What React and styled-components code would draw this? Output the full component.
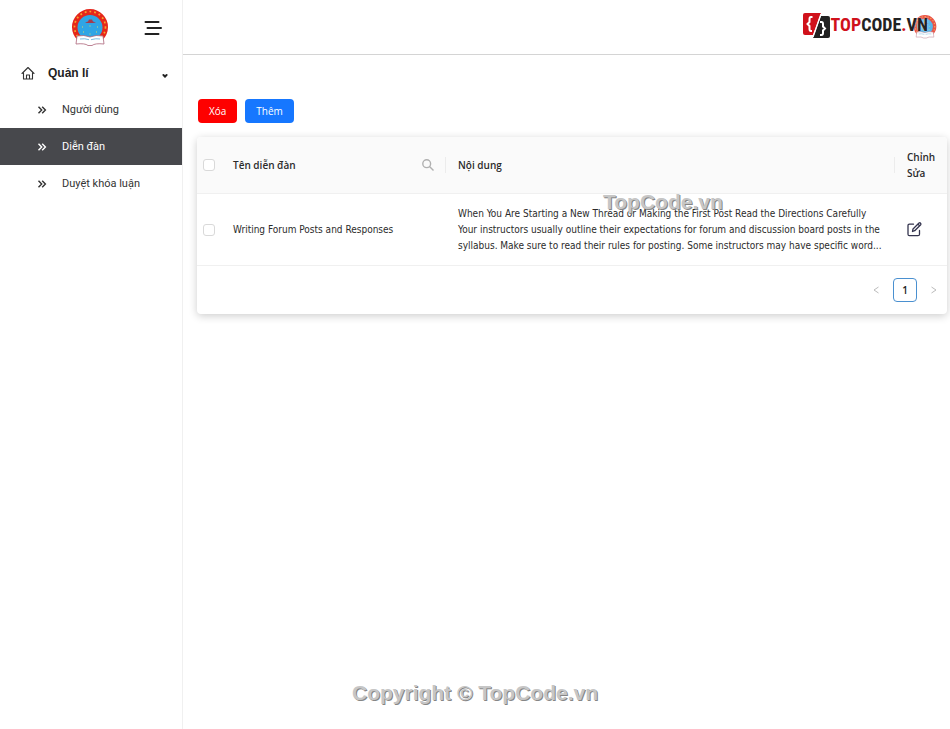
import React, { useState } from "react";
import styled, { createGlobalStyle } from "styled-components";

const GlobalStyle = createGlobalStyle`
  *, *::before, *::after { box-sizing: border-box; }
  body {
    margin: 0;
    background: #fff;
    color: #2b2b2b;
    font-family: "Open Sans", "Noto Sans", sans-serif;
    font-size: 10px;
    line-height: 16px;
  }
  button { font: inherit; cursor: pointer; }
`;

const Page = styled.div`
  position: relative;
  display: flex;
  min-height: 100vh;
`;

const Sidebar = styled.aside`
  flex: none;
  width: 183px;
  border-right: 1px solid #f0f0f0;
  font-family: "Liberation Sans", Arial, sans-serif;
`;

const Brand = styled.div`
  display: flex;
  align-items: center;
  justify-content: space-between;
  height: 55px;
  padding: 0 20px 0 71px;
`;

const IconButton = styled.button`
  display: flex;
  align-items: center;
  justify-content: center;
  padding: 0;
  border: 0;
  background: none;
  color: ${(p) => p.$color || "#222"};
`;

const GroupButton = styled.button`
  display: flex;
  align-items: center;
  width: 100%;
  height: 36px;
  padding: 0 13px 0 21px;
  border: 0;
  background: none;
  color: #222;
  && { font-size: 12px; font-weight: 700; }
`;

const GroupLabel = styled.span`
  flex: 1;
  padding-left: 13px;
  text-align: left;
`;

const Menu = styled.ul`
  margin: 0;
  padding: 0;
  list-style: none;
  font-family: Roboto, sans-serif;
  font-size: 11px;
`;

const MenuLink = styled.a`
  display: flex;
  align-items: center;
  gap: 15px;
  height: 37px;
  padding-left: 37px;
  color: ${(p) => (p.$active ? "#fff" : "#333")};
  background: ${(p) => (p.$active ? "#47484c" : "transparent")};
  text-decoration: none;
`;

const Main = styled.main`
  flex: 1;
  min-width: 0;
`;

const Header = styled.header`
  display: flex;
  align-items: center;
  justify-content: flex-end;
  height: 55px;
  padding: 0 13px 4px 0;
  border-bottom: 1px solid #d4d4d4;
`;

const SiteLogo = styled.a`
  position: relative;
  display: flex;
  align-items: center;
  gap: 1px;
  padding-right: 9px;
  text-decoration: none;
`;

const SiteName = styled.span`
  position: relative;
  z-index: 1;
  color: #222;
  font: 700 18px/26px "Roboto Condensed", Roboto, sans-serif;
  text-shadow: 0 0 2px #fff;
`;

const Accent = styled.span`
  color: #d0111b;
`;

const Badge = styled.span`
  position: absolute;
  right: 0;
  top: 3px;
  display: flex;
  opacity: 0.8;
`;

const Content = styled.div`
  padding: 44px 3px 0 14px;
`;

const Actions = styled.div`
  display: flex;
  gap: 8px;
  margin-bottom: 14px;
  padding-left: 1px;
`;

const Button = styled.button`
  height: 24px;
  padding: 0 11px;
  border: 0;
  border-radius: 4px;
  color: #fff;
  background: ${(p) => (p.$danger ? "#fe0000" : "#1677ff")};
`;

const Card = styled.section`
  position: relative;
  border-radius: 4px;
  background: #fff;
  box-shadow: 0 2px 8px rgba(0, 0, 0, 0.2);
`;

const Table = styled.table`
  width: 100%;
  table-layout: fixed;
  border-collapse: separate;
  border-spacing: 0;
`;

const Th = styled.th`
  position: relative;
  width: ${(p) => p.$width || "auto"};
  height: 57px;
  padding: ${(p) => (p.$tight ? "0" : "0 12px")};
  border-bottom: 1px solid #f0f0f0;
  background: #fafafa;
  font-weight: 600;
  text-align: left;
  &:first-child { border-top-left-radius: 4px; }
  &:last-child { border-top-right-radius: 4px; }
  &:not(:first-child):not(:last-child)::after {
    content: "";
    position: absolute;
    right: 0;
    top: 20px;
    width: 1px;
    height: 16px;
    background: #ececec;
  }
`;

const HeadCell = styled.div`
  display: flex;
  align-items: center;
  justify-content: space-between;
`;

const Td = styled.td`
  height: 72px;
  padding: ${(p) => (p.$tight ? "0" : "0 12px")};
  border-bottom: 1px solid #f0f0f0;
  font-family: "DejaVu Sans Condensed", "Open Sans", sans-serif;
`;

const Excerpt = styled.div`
  white-space: pre-line;
`;

const Checkbox = styled.input`
  appearance: none;
  display: block;
  width: 12px;
  height: 12px;
  margin: 0 auto;
  border: 1px solid #d9d9d9;
  border-radius: 3px;
  background: #fff;
  &:checked { background: #1677ff; border-color: #1677ff; }
`;

const Pagination = styled.nav`
  display: flex;
  align-items: center;
  justify-content: flex-end;
  gap: 14px;
  height: 48px;
  padding-right: 10px;
`;

const PageButton = styled.button`
  width: 24px;
  height: 24px;
  padding: 0;
  border: 1px solid #4a90d0;
  border-radius: 4px;
  background: #fff;
  color: #222;
  && { font-weight: 600; }
`;

const Watermark = styled.span`
  position: absolute;
  left: ${(p) => p.$left};
  ${(p) => (p.$bottom ? `bottom: ${p.$bottom};` : `top: ${p.$top};`)}
  transform: ${(p) => (p.$centered ? "translateX(-50%)" : "none")};
  color: #c6c6c6;
  font: 700 21px/26px "Liberation Sans", Arial, sans-serif;
  text-shadow: 1px 1px 0 #868686;
  white-space: nowrap;
  pointer-events: none;
`;

function Emblem({ size }) {
  return (
    <svg width={size} height={size} viewBox="0 0 38 38" aria-hidden="true">
      <path d="M6.5 31A18 18 0 1 1 31.500 31Z" fill="#e5261b" />
      <circle cx="19" cy="18" r="15.500" fill="none" stroke="#f7a52c" strokeWidth="1.700" strokeDasharray="1.800 3" />
      <circle cx="19" cy="18.500" r="12.500" fill="#2fa5e5" />
      <path d="M14 13.500l3-1 1-2h3l1 2 3 1-3 .4h-6z" fill="#a63a4c" />
      <path d="M18.500 17h1M11 18h1M26 18h1M12 23h1M25 23h1M18.500 25h1" stroke="#d7d96b" strokeWidth="1.200" />
      <path d="M6 27q7-1.500 13 1 6-2.500 13-1l1 8q-9-1-12 1.500h-4Q14 34 5 35Z" fill="#fff" stroke="#ac657a" strokeWidth=".8" />
      <path d="M9 30q5-.8 9 .7M20 30.700q5-1.500 9-.7" fill="none" stroke="#7ebee0" strokeWidth="1" />
    </svg>
  );
}

function CodeMark() {
  return (
    <svg width="27" height="27" viewBox="0 0 27 27" aria-hidden="true">
      <path d="M2 1h16L10 23H2Q0 23 0 21V3Q0 1 2 1Z" fill="#d0111b" />
      <path d="M18 4h7q2 0 2 2v18q0 2-2 2H10Z" fill="#222" />
      <path d="M9.500 5H8Q6.500 5 6.500 7v3L4.500 12l2 2v3q0 2 1.500 2h1M17 10h1.500Q20 10 20 12v2.500L22 16.500l-2 2V21q0 2-1.500 2H17" fill="none" stroke="#fff" strokeWidth="2" />
      <path d="M18 2 10 25" stroke="#fff" strokeWidth="1.300" />
    </svg>
  );
}

function MenuIcon() {
  return (
    <svg width="18" height="14" viewBox="0 0 18 14" fill="none" stroke="#222" strokeWidth="2" strokeLinecap="round" aria-hidden="true">
      <path d="M1.500 1h13M3.500 7H17M1.500 13h13" />
    </svg>
  );
}

function HomeIcon() {
  return (
    <svg width="14" height="14" viewBox="0 0 14 14" fill="none" stroke="#333" strokeWidth="1.100" strokeLinejoin="round" strokeLinecap="round" aria-hidden="true">
      <path d="M1 7.500 7 1.500l6 6M2.500 7v6h9V7M5.500 13V9h3v4" />
    </svg>
  );
}

function CaretIcon() {
  return (
    <svg width="8" height="12" viewBox="0 -6 8 12" aria-hidden="true">
      <path d="M1.500 1.500q0-.8 1-.5L4 2 5.500 1q1-.3 1 .5v1L4 5 1.500 2.500Z" fill="#222" />
    </svg>
  );
}

function ChevronsIcon() {
  return (
    <svg width="10" height="8" viewBox="0 0 10 8" fill="none" stroke="currentColor" strokeWidth="1.400" aria-hidden="true">
      <path d="M1.500.7 4.700 4 1.500 7.300M5.200.7 8.400 4 5.200 7.300" />
    </svg>
  );
}

function SearchIcon() {
  return (
    <svg width="12" height="12" viewBox="0 0 12 12" fill="none" stroke="currentColor" strokeWidth="1.400" aria-hidden="true">
      <circle cx="4.700" cy="4.700" r="3.900" />
      <path d="m7.500 7.500 4 4" />
    </svg>
  );
}

function EditIcon() {
  return (
    <svg width="15" height="15" viewBox="0 0 15 15" fill="none" stroke="currentColor" strokeWidth="1.300" strokeLinejoin="round" strokeLinecap="round" aria-hidden="true">
      <path d="M6.500 2.200H2.500q-1.500 0-1.500 1.500v8.500q0 1.500 1.500 1.500H11q1.500 0 1.500-1.500V8.500" />
      <path d="M5.500 9.500 6 7l6-6q1-.5 1.500.2.700.8.200 1.500l-6 6ZM11 2.200l1.700 1.700" />
    </svg>
  );
}

function ArrowIcon({ next }) {
  return (
    <svg width="6" height="8" viewBox="0 0 6 8" fill="none" stroke="currentColor" strokeWidth="1" aria-hidden="true">
      <path d={next ? "M.5 1 5 4 .5 7" : "M5.500 1 1 4l4.500 3"} />
    </svg>
  );
}

const links = ["Người dùng", "Diễn đàn", "Duyệt khóa luận"];

const forums = [
  {
    name: "Writing Forum Posts and Responses",
    body:
      "When You Are Starting a New Thread or Making the First Post Read the Directions Carefully\nYour instructors usually outline their expectations for forum and discussion board posts in the\nsyllabus. Make sure to read their rules for posting. Some instructors may have specific word...",
  },
];

export default function App() {
  const [active, setActive] = useState("Diễn đàn");
  const [open, setOpen] = useState(true);
  return (
    <Page>
      <GlobalStyle />
      <Sidebar>
        <Brand>
          <Emblem size={38} />
          <IconButton aria-label="Menu"><MenuIcon /></IconButton>
        </Brand>
        <GroupButton aria-expanded={open} onClick={() => setOpen(!open)}>
          <HomeIcon />
          <GroupLabel>Quản lí</GroupLabel>
          <CaretIcon />
        </GroupButton>
        {open && (
          <Menu>
            {links.map((label) => (
              <li key={label}>
                <MenuLink href="#" $active={label === active} onClick={() => setActive(label)}>
                  <ChevronsIcon />
                  {label}
                </MenuLink>
              </li>
            ))}
          </Menu>
        )}
      </Sidebar>
      <Main>
        <Header>
          <SiteLogo href="#">
            <CodeMark />
            <SiteName><Accent>TOP</Accent>CODE<Accent>.</Accent>VN</SiteName>
            <Badge><Emblem size={24} /></Badge>
          </SiteLogo>
        </Header>
        <Content>
          <Actions>
            <Button $danger>Xóa</Button>
            <Button>Thêm</Button>
          </Actions>
          <Card>
            <Table>
              <thead>
                <tr>
                  <Th $width="24px" $tight><Checkbox type="checkbox" aria-label="Select all" /></Th>
                  <Th $width="30%">
                    <HeadCell>
                      Tên diễn đàn
                      <IconButton $color="#b0b0b0" aria-label="Search"><SearchIcon /></IconButton>
                    </HeadCell>
                  </Th>
                  <Th>Nội dung</Th>
                  <Th $width="52px">Chỉnh Sửa</Th>
                </tr>
              </thead>
              <tbody>
                {forums.map((forum) => (
                  <tr key={forum.name}>
                    <Td $tight><Checkbox type="checkbox" aria-label={forum.name} /></Td>
                    <Td>{forum.name}</Td>
                    <Td><Excerpt>{forum.body}</Excerpt></Td>
                    <Td><IconButton $color="#34344e" aria-label="Edit"><EditIcon /></IconButton></Td>
                  </tr>
                ))}
              </tbody>
            </Table>
            <Pagination aria-label="Pages">
              <IconButton $color="#bbb" aria-label="Previous page"><ArrowIcon /></IconButton>
              <PageButton aria-current="page">1</PageButton>
              <IconButton $color="#bbb" aria-label="Next page"><ArrowIcon next /></IconButton>
            </Pagination>
            <Watermark $left="406px" $top="52px">TopCode.vn</Watermark>
          </Card>
        </Content>
      </Main>
      <Watermark $left="50%" $bottom="23px" $centered>Copyright © TopCode.vn</Watermark>
    </Page>
  );
}
